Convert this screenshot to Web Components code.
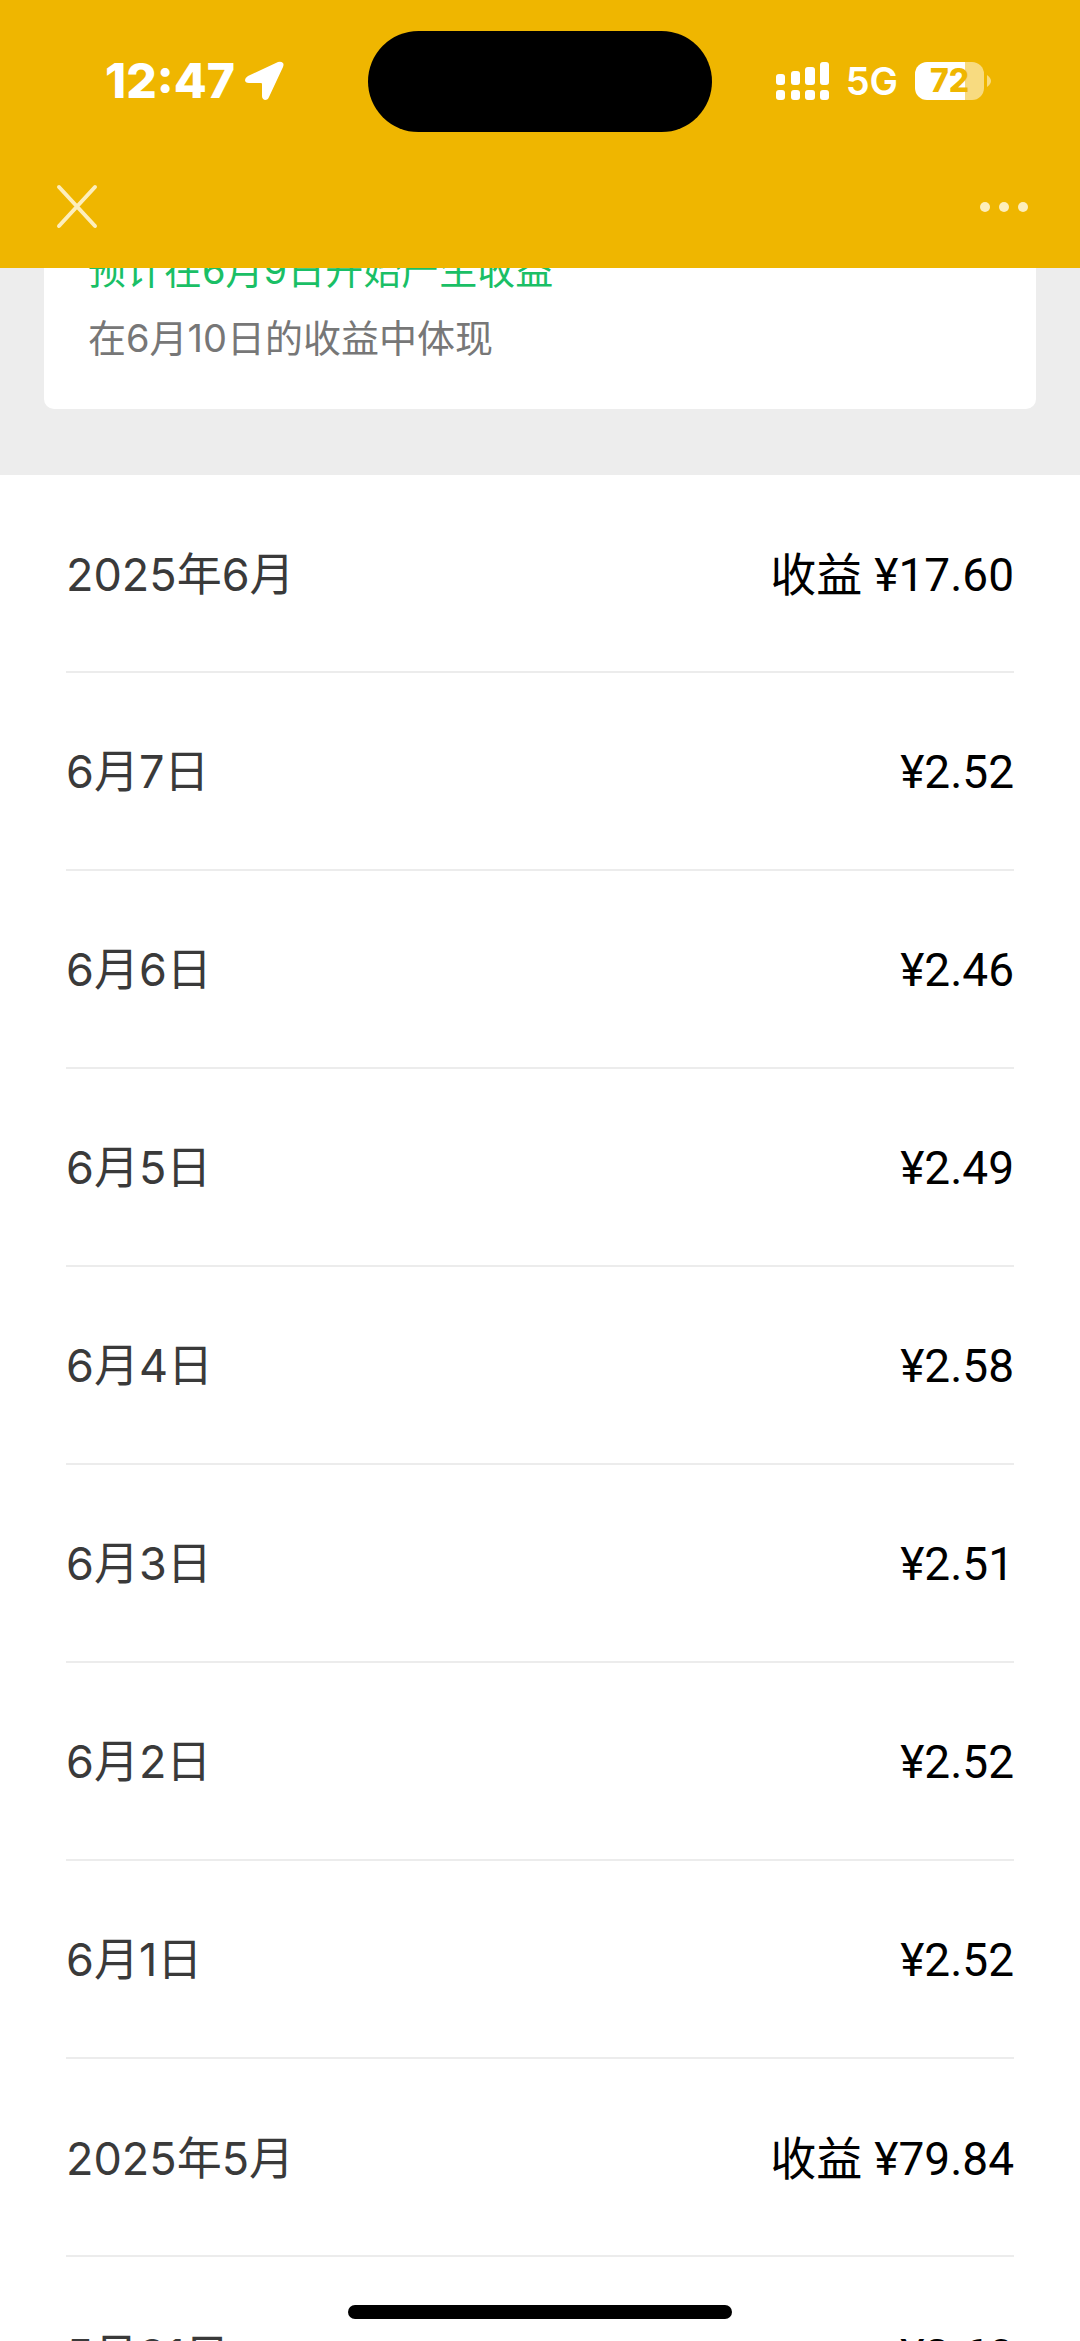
<!DOCTYPE html>
<html lang="zh-CN">
<head>
<meta charset="UTF-8">
<meta name="viewport" content="width=device-width, initial-scale=1">
<title>收益明细</title>
<style>
    body {
        margin: 0;
        font-family: 'Inter', 'Noto Sans CJK SC', sans-serif;
        background: white;
    }
</style>
</head>
<body>
<app-screen>
    <status-bar slot="header" time="12:47" network="5G" battery="72"></status-bar>
    <nav-bar slot="header"></nav-bar>

    <notice-card>
        <span>预计在6月9日开始产生收益</span>
        <span slot="note">在6月10日的收益中体现</span>
    </notice-card>

    <income-list>
        <income-row month>2025年6月<span slot="label">收益</span><span slot="amount">¥17.60</span></income-row>
        <income-row>6月7日<span slot="amount">¥2.52</span></income-row>
        <income-row>6月6日<span slot="amount">¥2.46</span></income-row>
        <income-row>6月5日<span slot="amount">¥2.49</span></income-row>
        <income-row>6月4日<span slot="amount">¥2.58</span></income-row>
        <income-row>6月3日<span slot="amount">¥2.51</span></income-row>
        <income-row>6月2日<span slot="amount">¥2.52</span></income-row>
        <income-row>6月1日<span slot="amount">¥2.52</span></income-row>
        <income-row month>2025年5月<span slot="label">收益</span><span slot="amount">¥79.84</span></income-row>
        <income-row>5月31日<span slot="amount">¥2.60</span></income-row>
    </income-list>
</app-screen>

<script>
class AppScreen extends HTMLElement {
    constructor() {
        super();
        this.attachShadow({ mode: 'open' });
    }

    connectedCallback() {
        this.shadowRoot.innerHTML = `
            <style>
                :host {
                    display: flex;
                    flex-direction: column;
                    position: relative;
                    height: 100vh;
                    overflow: hidden;
                }
                header {
                    position: relative;
                    z-index: 1;
                    flex: none;
                    background: #efb600;
                    color: white;
                }
                main {
                    flex: 1;
                    min-height: 0;
                    /* list is scrolled a little way under the header */
                    margin-top: -32px;
                }
                .home {
                    position: absolute;
                    bottom: 22px;
                    left: 50%;
                    width: 384px;
                    height: 14px;
                    margin-left: -192px;
                    border-radius: 7px;
                    background: black;
                }
            </style>
            <header><slot name="header"></slot></header>
            <main><slot></slot></main>
            <div class="home"></div>
        `;
    }
}

class StatusBar extends HTMLElement {
    constructor() {
        super();
        this.attachShadow({ mode: 'open' });
    }

    connectedCallback() {
        const battery = this.getAttribute('battery');
        this.shadowRoot.innerHTML = `
            <style>
                :host {
                    display: grid;
                    grid-template-columns: 1fr 344px 1fr;
                    align-items: center;
                    padding: 31px 0 16px;
                }
                .left, .right {
                    display: flex;
                    align-items: center;
                    padding-bottom: 2px;
                }
                .left {
                    padding-left: 105px;
                    gap: 10px;
                    font-size: 48px;
                    font-weight: 800;
                    line-height: 48px;
                }
                .right {
                    justify-content: flex-end;
                    padding-right: 89px;
                    gap: 17px;
                }
                .island {
                    height: 101px;
                    border-radius: 51px;
                    background: black;
                }
                .network {
                    font-size: 38px;
                    font-weight: 600;
                    line-height: 40px;
                }
                .battery {
                    display: flex;
                    align-items: center;
                    gap: 3px;
                }
                .level {
                    width: 69px;
                    border-radius: 12px;
                    background: linear-gradient(to right, white ${battery}%, #f8db80 ${battery}%);
                    color: #efb600;
                    font-size: 32px;
                    font-weight: 800;
                    line-height: 38px;
                    text-align: center;
                }
                svg {
                    display: block;
                }
            </style>
            <div class="left">
                <span>${this.getAttribute('time')}</span>
                <svg width="39" height="39" viewBox="0 0 39 39" fill="white" aria-hidden="true">
                    <path d="M33 1 L3 15 Q0 17 0 19 Q0 22 4 22 L16 22 Q17 22 17 23 L17 35 Q17 38 20 39 Q23 39 24 36 L38 6 Q39 3 38 2 Q36 0 33 1 Z"/>
                </svg>
            </div>
            <div class="island"></div>
            <div class="right">
                <svg width="53" height="38" viewBox="0 0 53 38" fill="white" aria-hidden="true">
                    <rect x="0" y="12" width="9" height="11" rx="3"/>
                    <rect x="15" y="9" width="9" height="14" rx="3"/>
                    <rect x="29" y="5" width="10" height="18" rx="3"/>
                    <rect x="44" y="0" width="9" height="23" rx="3"/>
                    <rect x="0" y="28" width="9" height="10" rx="3"/>
                    <rect x="15" y="28" width="9" height="10" rx="3"/>
                    <rect x="29" y="28" width="10" height="10" rx="3"/>
                    <rect x="44" y="28" width="9" height="10" rx="3"/>
                </svg>
                <span class="network">${this.getAttribute('network')}</span>
                <div class="battery">
                    <div class="level">${battery}</div>
                    <svg width="4" height="12" viewBox="0 0 4 12" fill="#f8db80" aria-hidden="true">
                        <path d="M0 0 Q4 3 4 6 Q4 9 0 12 Z"/>
                    </svg>
                </div>
            </div>
        `;
    }
}

class NavBar extends HTMLElement {
    constructor() {
        super();
        this.attachShadow({ mode: 'open' });
    }

    connectedCallback() {
        this.shadowRoot.innerHTML = `
            <style>
                :host {
                    display: flex;
                    justify-content: space-between;
                    align-items: center;
                    padding: 26px 40px 29px;
                }
                button {
                    padding: 10px 12px;
                    border: 0;
                    background: none;
                }
                svg {
                    display: block;
                }
            </style>
            <button aria-label="关闭">
                <svg width="50" height="45" viewBox="0 0 50 45" fill="none" stroke="#fdeebc" stroke-width="4" stroke-linecap="round">
                    <path d="M7 3 L43 42 M43 3 L7 42"/>
                </svg>
            </button>
            <button aria-label="更多">
                <svg width="48" height="12" viewBox="0 0 48 12" fill="#fdeebc">
                    <circle cx="5" cy="6" r="5"/>
                    <circle cx="24" cy="6" r="5"/>
                    <circle cx="43" cy="6" r="5"/>
                </svg>
            </button>
        `;
    }
}

class NoticeCard extends HTMLElement {
    constructor() {
        super();
        this.attachShadow({ mode: 'open' });
    }

    connectedCallback() {
        this.shadowRoot.innerHTML = `
            <style>
                :host {
                    display: block;
                    padding: 0 44px 66px;
                    background: #ededed;
                }
                .card {
                    padding: 0 44px 37px;
                    border-radius: 0 0 10px 10px;
                    background: white;
                    font-size: 38px;
                    line-height: 68px;
                }
                p {
                    margin: 0;
                }
                .start {
                    color: #1abf66;
                }
                .note {
                    color: #777777;
                }
            </style>
            <div class="card">
                <p class="start"><slot></slot></p>
                <p class="note"><slot name="note"></slot></p>
            </div>
        `;
    }
}

class IncomeList extends HTMLElement {
    constructor() {
        super();
        this.attachShadow({ mode: 'open' });
    }

    connectedCallback() {
        this.setAttribute('role', 'list');
        this.shadowRoot.innerHTML = `
            <style>
                :host {
                    display: block;
                    padding: 0 66px;
                    background: white;
                }
            </style>
            <slot></slot>
        `;
    }
}

class IncomeRow extends HTMLElement {
    constructor() {
        super();
        this.attachShadow({ mode: 'open' });
    }

    connectedCallback() {
        this.setAttribute('role', 'listitem');
        this.shadowRoot.innerHTML = `
            <style>
                :host {
                    display: flex;
                    align-items: baseline;
                    gap: 12px;
                    padding: 66px 0 64px;
                    border-bottom: 2px solid #ececec;
                    font-size: 46px;
                    line-height: 66px;
                    color: black;
                }
                :host([month]) {
                    padding-bottom: 63px;
                }
                .date {
                    flex: 1;
                    font-size: 45px;
                    color: #3a3a3a;
                }
                .amount {
                    font-family: Roboto, sans-serif;
                    font-weight: 400;
                }
            </style>
            <span class="date"><slot></slot></span>
            <span><slot name="label"></slot></span>
            <span class="amount"><slot name="amount"></slot></span>
        `;
    }
}

customElements.define('app-screen', AppScreen);
customElements.define('status-bar', StatusBar);
customElements.define('nav-bar', NavBar);
customElements.define('notice-card', NoticeCard);
customElements.define('income-list', IncomeList);
customElements.define('income-row', IncomeRow);
</script>
</body>
</html>
